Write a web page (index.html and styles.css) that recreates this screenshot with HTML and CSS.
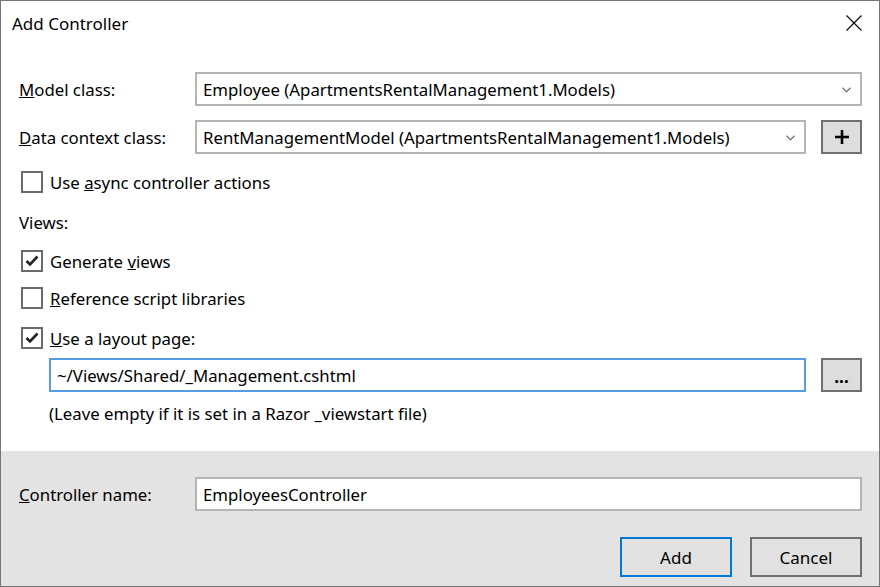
FILE: index.html
```html
<!DOCTYPE html>
<html>
<head>
<meta charset="utf-8">
<link rel="stylesheet" href="styles.css">
</head>
<body>
<div class="window">
  <div class="titlebar">
    <span class="title">Add Controller</span>
    <svg class="close" width="16" height="16" viewBox="0 0 16 16"><path d="M0.5 0.5 L15.5 15.5 M15.5 0.5 L0.5 15.5" stroke="#000" stroke-width="1.1" fill="none"/></svg>
  </div>
  <div class="content">
    <div class="form-row row-model">
      <label class="label"><u>M</u>odel class:</label>
      <div class="combo">
        <span class="combo-text">Employee (ApartmentsRentalManagement1.Models)</span>
        <svg class="chev" width="9" height="6" viewBox="0 0 9 6"><path d="M0.5 0.8 L4.5 4.8 L8.5 0.8" stroke="#777" stroke-width="1.3" fill="none"/></svg>
      </div>
    </div>
    <div class="form-row row-data">
      <label class="label"><u>D</u>ata context class:</label>
      <div class="combo">
        <span class="combo-text">RentManagementModel (ApartmentsRentalManagement1.Models)</span>
        <svg class="chev" width="9" height="6" viewBox="0 0 9 6"><path d="M0.5 0.8 L4.5 4.8 L8.5 0.8" stroke="#777" stroke-width="1.3" fill="none"/></svg>
      </div>
      <div class="btn-small">
        <svg width="14" height="14" viewBox="0 0 14 14"><path d="M7 0 V14 M0 7 H14" stroke="#000" stroke-width="2.6" fill="none"/></svg>
      </div>
    </div>
    <div class="check-row row-async">
      <span class="box"></span>
      <span class="check-label">Use <u>a</u>sync controller actions</span>
    </div>
    <div class="text-row row-views">Views:</div>
    <div class="check-row row-generate">
      <span class="box"><svg width="18" height="18" viewBox="0 0 18 18"><path d="M3.5 9 L7 12.5 L14.5 4.5" stroke="#222" stroke-width="2.6" fill="none"/></svg></span>
      <span class="check-label">Generate <u>v</u>iews</span>
    </div>
    <div class="check-row row-reference">
      <span class="box"></span>
      <span class="check-label"><u>R</u>eference script libraries</span>
    </div>
    <div class="check-row row-layout">
      <span class="box"><svg width="18" height="18" viewBox="0 0 18 18"><path d="M3.5 9 L7 12.5 L14.5 4.5" stroke="#222" stroke-width="2.6" fill="none"/></svg></span>
      <span class="check-label"><u>U</u>se a layout page:</span>
    </div>
    <div class="layout-row">
      <div class="textbox focused">~/Views/Shared/_Management.cshtml</div>
      <div class="btn-small dots">...</div>
    </div>
    <div class="text-row hint">(Leave empty if it is set in a Razor _viewstart file)</div>
  </div>
  <div class="footer">
    <div class="form-row row-name">
      <label class="label"><u>C</u>ontroller name:</label>
      <div class="textbox">EmployeesController</div>
    </div>
    <div class="buttons">
      <div class="btn default">Add</div>
      <div class="btn">Cancel</div>
    </div>
  </div>
</div>
</body>
</html>
```

FILE: styles.css
```css
html, body {
  margin: 0;
  padding: 0;
  background: #fff;
}

.window {
  width: 880px;
  height: 587px;
  box-sizing: border-box;
  border: 1px solid #767676;
  display: flex;
  flex-direction: column;
  background: #fff;
  font-family: "Segoe UI", "Noto Sans", "Open Sans", sans-serif;
  font-size: 16.8px;
  color: #000;
}

.titlebar {
  height: 44px;
  flex: none;
  display: flex;
  align-items: center;
  justify-content: space-between;
  padding: 0 17px 0 11px;
}

.title {
  font-size: 17px;
}

.close {
  margin-top: -1px;
}

.content {
  flex: 1;
  padding: 0 17px 0 18px;
  display: flex;
  flex-direction: column;
}

.form-row {
  display: flex;
  align-items: center;
  height: 34px;
  flex: none;
}

.row-model { margin-top: 27px; }
.row-data { margin-top: 14px; }

.label {
  width: 176px;
  flex: none;
}

.combo {
  flex: 1;
  height: 34px;
  box-sizing: border-box;
  border: 2px solid #b4b4b4;
  background: #fff;
  display: flex;
  align-items: center;
  justify-content: space-between;
  padding: 0 9px 0 6px;
}

.chev {
  margin-top: 1px;
}

.btn-small {
  width: 41px;
  height: 34px;
  box-sizing: border-box;
  margin-left: 15px;
  flex: none;
  background: #dddddd;
  border: 2px solid #707070;
  display: flex;
  align-items: center;
  justify-content: center;
}

.dots {
  font-size: 17px;
  font-weight: bold;
  line-height: 1;
  padding-top: 2px;
}

.check-row {
  display: flex;
  align-items: center;
  height: 22px;
  flex: none;
  padding-left: 2px;
}

.box {
  width: 22px;
  height: 22px;
  box-sizing: border-box;
  border: 2px solid #6a6a6a;
  background: #fff;
  display: flex;
  align-items: center;
  justify-content: center;
  margin-right: 7px;
  flex: none;
}

.text-row {
  height: 22px;
  display: flex;
  align-items: center;
  flex: none;
}

.row-async { margin-top: 17px; }
.row-views { margin-top: 18px; }
.row-generate { margin-top: 17px; }
.row-reference { margin-top: 15px; }
.row-layout { margin-top: 18px; }

.layout-row {
  display: flex;
  align-items: center;
  margin-top: 9px;
  padding-left: 30px;
  flex: none;
}

.textbox {
  flex: 1;
  height: 34px;
  box-sizing: border-box;
  border: 2px solid #b4b4b4;
  background: #fff;
  display: flex;
  align-items: center;
  padding: 0 6px;
}

.textbox.focused {
  border-color: #569de5;
}

.hint {
  margin-top: 10px;
  padding-left: 30px;
}

.footer {
  height: 135px;
  flex: none;
  background: #e3e3e3;
  padding: 0 17px 0 18px;
  display: flex;
  flex-direction: column;
}

.row-name { margin-top: 26px; }

.buttons {
  display: flex;
  justify-content: flex-end;
  gap: 18px;
  margin-top: 26px;
}

.btn {
  width: 112px;
  height: 40px;
  box-sizing: border-box;
  border: 2px solid #707070;
  background: #e1e1e1;
  display: flex;
  align-items: center;
  justify-content: center;
  font-size: 17px;
}

.btn.default {
  border-color: #0078d7;
}
```
